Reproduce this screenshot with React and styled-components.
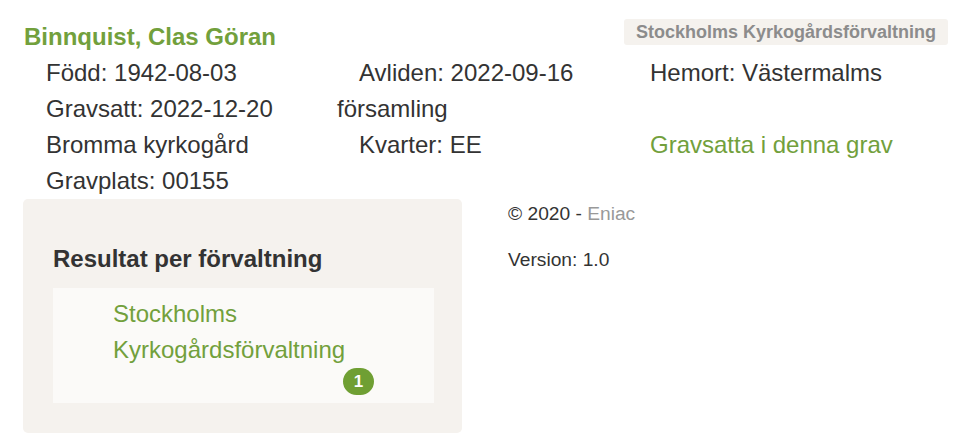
import styled, { createGlobalStyle } from 'styled-components'

const GlobalStyle = createGlobalStyle`
    body {
        margin: 0;
        background: #fff;
        font-family: "Liberation Sans", Arial, sans-serif;
        color: #333;
    }
`

const details = [
    [{ text: 'Född: 1942-08-03' }, { text: 'Avliden: 2022-09-16' }, { text: 'Hemort: Västermalms' }],
    [{ text: 'Gravsatt: 2022-12-20' }, { text: 'församling', shift: -22 }, { text: '' }],
    [{ text: 'Bromma kyrkogård' }, { text: 'Kvarter: EE' }, { text: 'Gravsatta i denna grav', link: true }],
    [{ text: 'Gravplats: 00155' }, { text: '' }, { text: '' }],
]

export default function App() {
    return (
        <>
        <GlobalStyle />
        <Page>
            <Header>
                <Name>Binnquist, Clas Göran</Name>
                <Tag>Stockholms Kyrkogårdsförvaltning</Tag>
            </Header>
            <Details>
                {details.flat().map((cell, i) => (
                    <Cell key={i} $shift={cell.shift} $link={cell.link}>{cell.text}</Cell>
                ))}
            </Details>
            <Bottom>
                <Panel>
                    <PanelTitle>Resultat per förvaltning</PanelTitle>
                    <ResultBox>
                        <ResultItem>
                            <ResultLink>Stockholms Kyrkogårdsförvaltning</ResultLink>
                            <Badge>1</Badge>
                        </ResultItem>
                    </ResultBox>
                </Panel>
                <Footer>
                    <FooterLine>© 2020 - <Muted>Eniac</Muted></FooterLine>
                    <FooterLine>Version: 1.0</FooterLine>
                </Footer>
            </Bottom>
        </Page>
        </>
    )
}

const Page = styled.div`
    padding: 19px 10px 0 23px;
`
const Header = styled.div`
    display: flex;
    justify-content: space-between;
    align-items: flex-start;
`
const Name = styled.div`
    margin: 3px 0 0 1px;
    font-size: 24px;
    line-height: 29px;
    font-weight: bold;
    color: #72a03c;
`
const Tag = styled.div`
    padding: 1px 12px;
    line-height: 24px;
    font-size: 18px;
    font-weight: bold;
    color: #8c8c8c;
    background: #f5f2ee;
    border-radius: 3px;
`
const Details = styled.div`
    display: grid;
    grid-template-columns: 313px 291px 1fr;
    grid-auto-rows: 36px;
    margin: 4px 0 0 23px;
    font-size: 24px;
    line-height: 36px;
`
const Cell = styled.div`
    white-space: nowrap;
    margin-left: ${p => p.$shift || 0}px;
    color: ${p => p.$link ? '#72a03c' : '#333'};
`
const Bottom = styled.div`
    display: flex;
    align-items: flex-start;
    gap: 46px;
`
const Panel = styled.div`
    width: 439px;
    box-sizing: border-box;
    padding: 30px 28px 30px 30px;
    background: #f5f2ee;
    border-radius: 5px;
`
const PanelTitle = styled.h3`
    margin: 15px 0;
    font-size: 24px;
    line-height: 29px;
    font-weight: bold;
    color: #333;
`
const ResultBox = styled.div`
    padding: 8px 0 8px 60px;
    background: #fbfaf8;
`
const ResultItem = styled.div`
    width: 261px;
    display: flex;
    flex-direction: column;
    align-items: flex-end;
`
const ResultLink = styled.div`
    align-self: stretch;
    font-size: 24px;
    line-height: 36px;
    color: #72a03c;
`
const Badge = styled.span`
    min-width: 31px;
    height: 27px;
    box-sizing: border-box;
    border-radius: 14px;
    background: #6f9f33;
    color: #fff;
    font-size: 17px;
    font-weight: bold;
    line-height: 27px;
    text-align: center;
`
const Footer = styled.div`
    padding-top: 1px;
`
const FooterLine = styled.p`
    margin: 0 0 19px;
    font-size: 19.2px;
    line-height: 27px;
    color: #333;
`
const Muted = styled.span`
    color: #999;
`
